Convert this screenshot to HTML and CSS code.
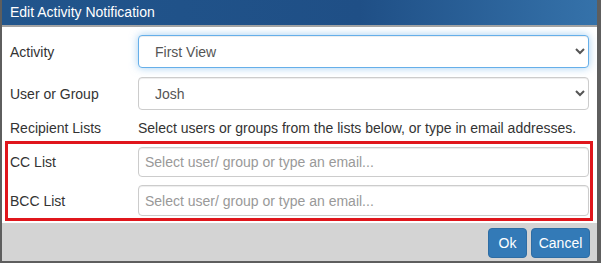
FILE: index.html
```html
<!DOCTYPE html>
<html lang="en">
<head>
  <meta charset="UTF-8">
  <title>Edit Activity Notification</title>
  <link rel="stylesheet" href="styles.css">
</head>
<body>
  <div class="dialog">
    <div class="dialog-title">Edit Activity Notification</div>

    <div class="dialog-body">
      <div class="row">
        <label class="row-label">Activity</label>
        <select class="form-control focused">
          <option>First View</option>
        </select>
      </div>

      <div class="row">
        <label class="row-label">User or Group</label>
        <select class="form-control">
          <option>Josh</option>
        </select>
      </div>

      <div class="row row-info">
        <span class="row-label">Recipient Lists</span>
        <span class="hint">Select users or groups from the lists below, or type in email addresses.</span>
      </div>

      <!-- markierter Bereich -->
      <div class="highlight">
        <div class="row row-small">
          <label class="row-label">CC List</label>
          <input class="form-control" type="text" placeholder="Select user/ group or type an email...">
        </div>
        <div class="row row-small">
          <label class="row-label">BCC List</label>
          <input class="form-control" type="text" placeholder="Select user/ group or type an email...">
        </div>
      </div>
    </div>

    <div class="dialog-footer">
      <button class="btn btn-ok">Ok</button>
      <button class="btn btn-cancel">Cancel</button>
    </div>
  </div>
</body>
</html>
```

FILE: styles.css
```css
html, body {
  margin: 0;
  height: 263px;
}
body {
  background: #5e5e5e;
  font-family: "Liberation Sans", Arial, sans-serif;
  font-size: 14px;
  color: #333;
  overflow: hidden;
}
.dialog {
  margin-left: 2px;
  width: 595px;
  height: 261px;
  background: #fff;
  display: flex;
  flex-direction: column;
}
.dialog-title {
  height: 25px;
  line-height: 25px;
  padding-left: 8px;
  color: #fff;
  font-size: 14px;
  background: linear-gradient(to right, #21558c 0%, #1f4f86 60%, #3572aa 100%);
  border-bottom: 2px solid #a3a3a3;
}
.dialog-body {
  padding: 8px 0 2px 0;
}
.row {
  display: grid;
  grid-template-columns: 128px 451px;
  align-items: center;
  padding-left: 8px;
  margin-bottom: 9px;
}
.row-info {
  margin-bottom: 0;
  height: 18px;
  padding-bottom: 4px;
}
.row-small {
  margin-bottom: 8px;
}
.row-small:last-child {
  margin-bottom: 0;
}
.form-control {
  box-sizing: border-box;
  height: 33px;
  padding: 6px 12px;
  font-family: inherit;
  font-size: 14px;
  color: #555;
  background: #fff;
  border: 1px solid #ccc;
  border-radius: 4px;
  box-shadow: inset 0 1px 1px rgba(0, 0, 0, 0.075);
}
.focused {
  border-color: #66afe9;
  box-shadow: inset 0 1px 1px rgba(0, 0, 0, 0.075), 0 0 8px rgba(102, 175, 233, 0.6);
  outline: none;
}
input.form-control {
  height: 31px;
  padding-left: 6px;
}
input.form-control::placeholder {
  color: #999;
}
.hint {
  color: #333;
}
.highlight {
  margin-left: 3px;
  width: 582px;
  border: 3px solid #e0161c;
  padding: 3px 0 2px 0;
}
.highlight .row {
  padding-left: 2px;
}
.highlight .row-small:first-child input {
  height: 30px;
}
.dialog-footer {
  flex: 1;
  background: #d4d4d4;
  display: flex;
  justify-content: flex-end;
  align-items: flex-start;
  gap: 4px;
  padding: 5px 7px 0 0;
}
.btn {
  height: 30px;
  padding: 0;
  font-family: inherit;
  font-size: 14px;
  color: #fff;
  background: #337ab7;
  border: 1px solid #2e6da4;
  border-radius: 4px;
}
.btn-ok {
  width: 39px;
}
.btn-cancel {
  width: 59px;
}
```
